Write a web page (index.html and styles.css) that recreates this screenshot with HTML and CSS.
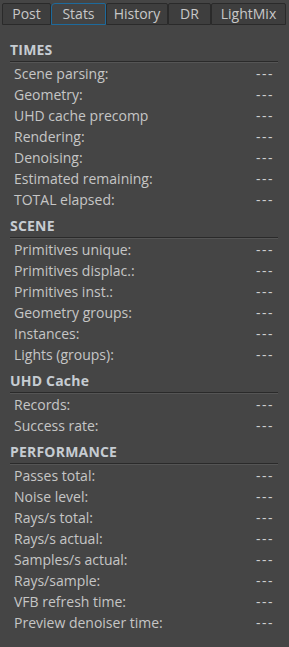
FILE: index.html
```html
<!DOCTYPE html>
<html lang="en">
<head>
  <meta charset="UTF-8">
  <title>Render Stats</title>
  <link rel="stylesheet" href="styles.css">
</head>
<body>

  <div class="panel">
    <div class="tabs">
      <div class="tab">Post</div>
      <div class="tab active">Stats</div>
      <div class="tab">History</div>
      <div class="tab">DR</div>
      <div class="tab">LightMix</div>
    </div>

    <div class="stats">
      <div class="group">
        <h3>TIMES</h3>
        <ul class="rows">
          <li><span>Scene parsing:</span><span class="val">---</span></li>
          <li><span>Geometry:</span><span class="val">---</span></li>
          <li><span>UHD cache precomp</span><span class="val">---</span></li>
          <li><span>Rendering:</span><span class="val">---</span></li>
          <li><span>Denoising:</span><span class="val">---</span></li>
          <li><span>Estimated remaining:</span><span class="val">---</span></li>
          <li><span>TOTAL elapsed:</span><span class="val">---</span></li>
        </ul>
      </div>

      <div class="group">
        <h3>SCENE</h3>
        <ul class="rows">
          <li><span>Primitives unique:</span><span class="val">---</span></li>
          <li><span>Primitives displac.:</span><span class="val">---</span></li>
          <li><span>Primitives inst.:</span><span class="val">---</span></li>
          <li><span>Geometry groups:</span><span class="val">---</span></li>
          <li><span>Instances:</span><span class="val">---</span></li>
          <li><span>Lights (groups):</span><span class="val">---</span></li>
        </ul>
      </div>

      <div class="group">
        <h3>UHD Cache</h3>
        <ul class="rows">
          <li><span>Records:</span><span class="val">---</span></li>
          <li><span>Success rate:</span><span class="val">---</span></li>
        </ul>
      </div>

      <div class="group">
        <h3>PERFORMANCE</h3>
        <ul class="rows">
          <li><span>Passes total:</span><span class="val">---</span></li>
          <li><span>Noise level:</span><span class="val">---</span></li>
          <li><span>Rays/s total:</span><span class="val">---</span></li>
          <li><span>Rays/s actual:</span><span class="val">---</span></li>
          <li><span>Samples/s actual:</span><span class="val">---</span></li>
          <li><span>Rays/sample:</span><span class="val">---</span></li>
          <li><span>VFB refresh time:</span><span class="val">---</span></li>
          <li><span>Preview denoiser time:</span><span class="val">---</span></li>
        </ul>
      </div>
    </div>
  </div>

</body>
</html>
```

FILE: styles.css
```css
html, body {
  margin: 0;
  padding: 0;
  background: #454545;
}
body {
  font-family: "Open Sans", "Noto Sans", sans-serif;
  font-size: 14px;
  color: #c6c6c6;
}
.panel {
  width: 289px;
  height: 647px;
  background: #454545;
}
.tabs {
  display: grid;
  grid-template-columns: 49px 55px 62px 43px 75px;
  padding: 3px 2px 0 2px;
  height: 22px;
}
.tab {
  box-sizing: border-box;
  height: 22px;
  line-height: 20px;
  text-align: center;
  background: #3e3e3e;
  border: 1px solid #2a2a2a;
  border-radius: 2px 2px 0 0;
  font-size: 14px;
  color: #c8c8c8;
}
.tab.active {
  background: #434343;
  border-color: #1d6a9c;
  border-top-left-radius: 4px;
}
.stats {
  padding: 14px 11px 0 10px;
}
.group {
  margin-bottom: 5px;
}
.group h3 {
  margin: 0;
  height: 22px;
  line-height: 22px;
  font-size: 14px;
  font-weight: bold;
  letter-spacing: 0.2px;
  color: #c6ccd2;
  border-bottom: 1px solid #2a2a2a;
  box-shadow: 0 1px 0 #555555;
}
.rows {
  list-style: none;
  margin: 0;
  padding: 1px 4px 0 4px;
}
.rows li {
  display: flex;
  justify-content: space-between;
  height: 21px;
  line-height: 21px;
  font-size: 14px;
}
.rows .val {
  letter-spacing: 1.5px;
  color: #d0d0d0;
}
```
